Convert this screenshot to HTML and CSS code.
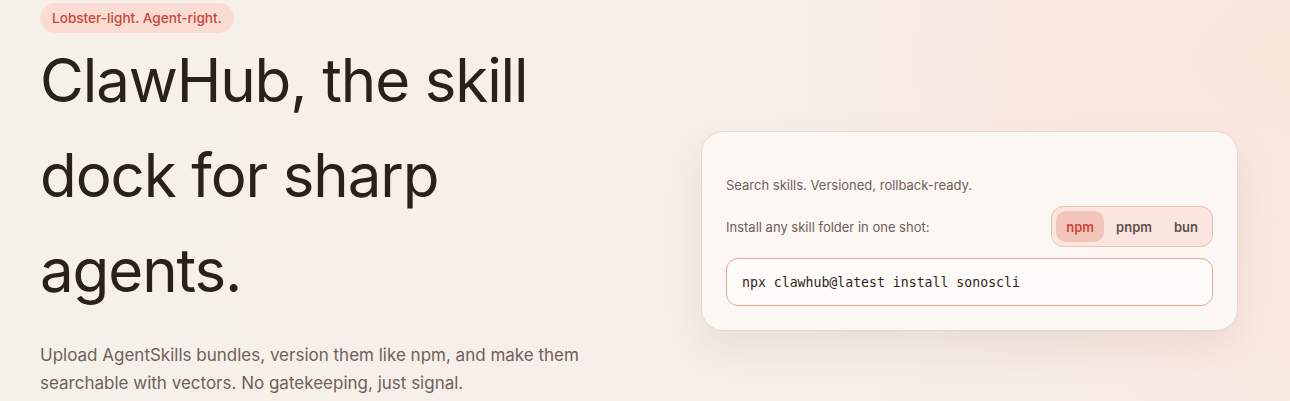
FILE: index.html
```html
<!DOCTYPE html>
<html lang="en">
<head>
<meta charset="utf-8">
<title>ClawHub</title>
<link rel="stylesheet" href="styles.css">
</head>
<body>
<main class="hero">
  <section class="hero-copy">
    <span class="tag">Lobster-light. Agent-right.</span>
    <h1 class="title">ClawHub, the skill dock for sharp agents.</h1>
    <p class="lede">Upload AgentSkills bundles, version them like npm, and make them searchable with vectors. No gatekeeping, just signal.</p>
  </section>
  <aside class="card">
    <p class="card-sub">Search skills. Versioned, rollback-ready.</p>
    <div class="install-row">
      <span class="install-label">Install any skill folder in one shot:</span>
      <div class="pm-toggle">
        <button class="pm pm-active">npm</button>
        <button class="pm">pnpm</button>
        <button class="pm">bun</button>
      </div>
    </div>
    <div class="cmd">npx clawhub@latest install sonoscli</div>
  </aside>
</main>
</body>
</html>
```

FILE: styles.css
```css
* { box-sizing: border-box; }
html, body { margin: 0; padding: 0; }
body {
  width: 1290px;
  height: 401px;
  overflow: hidden;
  font-family: Inter, "Noto Sans", sans-serif;
  color: #2a201c;
  background:
    radial-gradient(ellipse 520px 380px at 1290px 60px, #fbe6dc 0%, rgba(251,230,220,0) 100%),
    linear-gradient(90deg, #f6f0eb 0%, #f7efe9 60%, #f9ebe3 100%);
}
.hero {
  display: grid;
  grid-template-columns: 661px 537px;
  align-items: start;
  padding: 3px 0 0 40px;
}
.hero-copy { display: flex; flex-direction: column; align-items: flex-start; }
.tag {
  display: inline-block;
  background: #fbdcd3;
  color: #c8463a;
  font-size: 13.6px;
  font-weight: 500;
  line-height: 30px;
  padding: 0 12px;
  border-radius: 15px;
}
.title {
  margin: 0;
  width: 560px;
  font-size: 60px;
  font-weight: 400;
  line-height: 95px;
  letter-spacing: -1.1px;
  color: #2a201c;
}
.lede {
  margin: 23px 0 0;
  width: 560px;
  font-size: 17px;
  line-height: 28px;
  color: #6f605a;
}
.card {
  margin-top: 128px;
  height: 200px;
  background: #fcf7f3;
  border: 1px solid #e4dad4;
  border-radius: 22px;
  padding: 43px 24px 23px;
  box-shadow: 0 18px 40px rgba(120, 80, 60, 0.10);
}
.card-sub {
  margin: 0;
  font-size: 13px;
  line-height: 20px;
  color: #6f605a;
}
.install-row {
  display: flex;
  align-items: center;
  justify-content: space-between;
  margin-top: 11px;
}
.install-label { font-size: 13px; color: #6f605a; }
.pm-toggle {
  display: flex;
  gap: 2px;
  padding: 4px;
  background: #fae6de;
  border: 1px solid #f0bfb1;
  border-radius: 12px;
}
.pm {
  border: 0;
  background: transparent;
  font-family: Inter, "Noto Sans", sans-serif;
  font-size: 13px;
  font-weight: 600;
  color: #5e504b;
  height: 31px;
  padding: 0 10px;
  border-radius: 10px;
}
.pm-active { background: #f3c4b8; color: #cc4436; }
.cmd {
  margin-top: 11px;
  height: 48px;
  flex-shrink: 0;
  display: flex;
  align-items: center;
  padding: 0 15px;
  background: #fefbf9;
  border: 1px solid #e9a797;
  border-radius: 12px;
  font-family: "DejaVu Sans Mono", "Liberation Mono", monospace;
  font-size: 13.2px;
  color: #2f2622;
}
```
